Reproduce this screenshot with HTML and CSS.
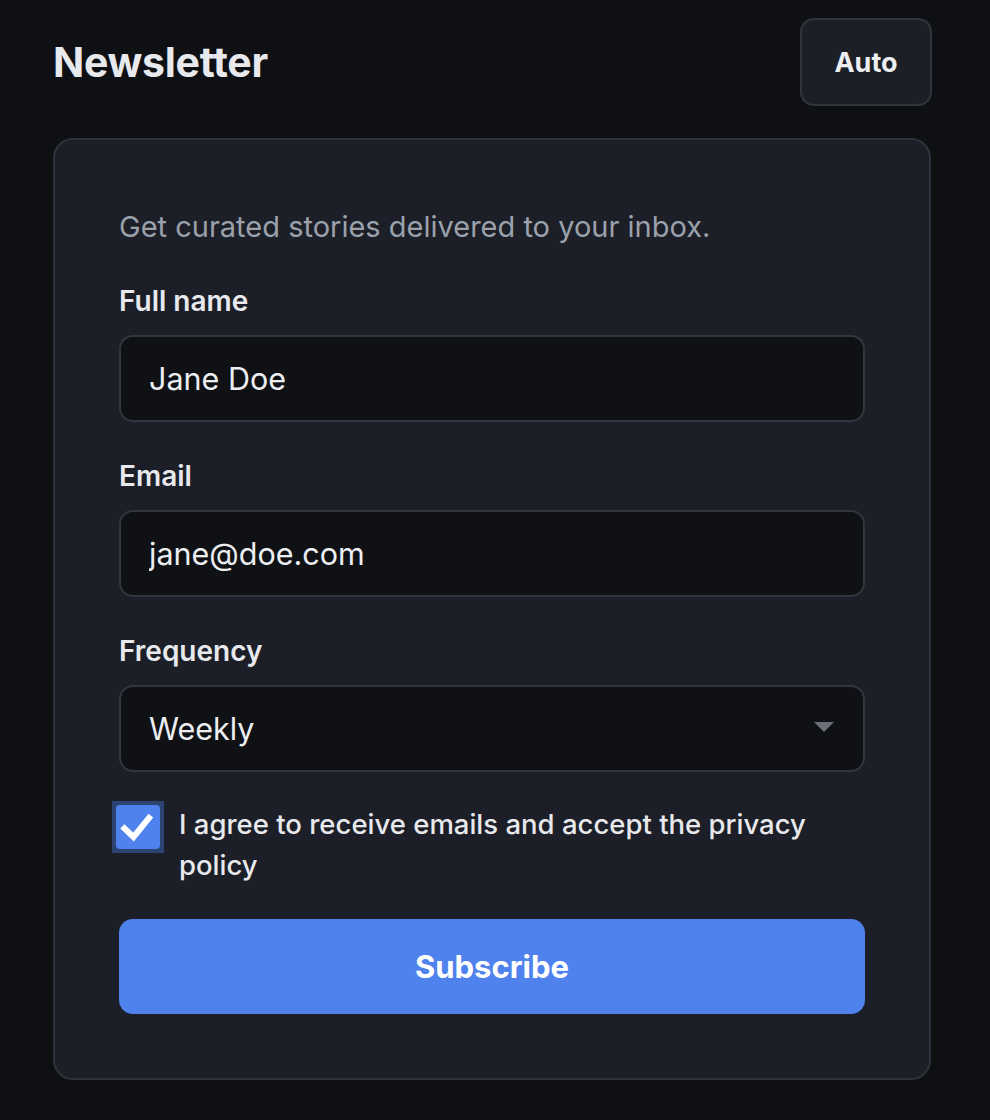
FILE: index.html
```html
<!DOCTYPE html>
<html lang="en">
<head>
    <meta charset="UTF-8">
    <meta name="viewport" content="width=device-width, initial-scale=1.0">
    <title>Newsletter</title>
    <link rel="stylesheet" href="styles.css">
</head>
<body>
    <div class="page">
        <header class="top-bar">
            <h1>Newsletter</h1>
            <button class="theme-btn">Auto</button>
        </header>

        <form class="card">
            <p class="intro">Get curated stories delivered to your inbox.</p>

            <div class="form-group">
                <label for="full-name">Full name</label>
                <input type="text" id="full-name" value="Jane Doe">
            </div>

            <div class="form-group">
                <label for="email">Email</label>
                <input type="email" id="email" value="jane@doe.com">
            </div>

            <div class="form-group">
                <label for="frequency">Frequency</label>
                <div class="select-wrap">
                    <select id="frequency">
                        <option>Daily</option>
                        <option selected>Weekly</option>
                        <option>Monthly</option>
                    </select>
                    <svg class="caret" width="20" height="10" viewBox="0 0 20 10"><path d="M0 0h20L10 10z" fill="#6b7079"/></svg>
                </div>
            </div>

            <label class="agree">
                <span class="check-ring">
                    <span class="check-box">
                        <svg width="42" height="42" viewBox="0 0 42 42"><path d="M8.5 23.5l9 8.5L33 13" fill="none" stroke="#fff" stroke-width="6" stroke-linecap="square"/></svg>
                    </span>
                </span>
                <span class="agree-text">I agree to receive emails and accept the privacy policy</span>
            </label>

            <button type="button" class="btn">Subscribe</button>
        </form>
    </div>
</body>
</html>
```

FILE: styles.css
```css
body {
    margin: 0;
    background: #0e1014;
    color: #e8e9ed;
    font-family: Inter, "Noto Sans", Arial, sans-serif;
}
.page {
    padding: 18px 59px 40px 53px;
}
.top-bar {
    display: flex;
    justify-content: space-between;
    align-items: center;
    margin-bottom: 32px;
}
h1 {
    margin: 0;
    font-size: 41px;
    font-weight: 700;
    letter-spacing: -0.3px;
}
.theme-btn {
    width: 132px;
    height: 88px;
    margin-right: -1px;
    background: #1c1f26;
    color: #eceef2;
    border: 2px solid #30343c;
    border-radius: 14px;
    font-family: inherit;
    font-size: 27px;
    font-weight: 700;
}
.card {
    display: flex;
    flex-direction: column;
    gap: 36px;
    background: #1c1f27;
    border: 2px solid #2e323a;
    border-radius: 20px;
    padding: 67px 64px 64px;
}
.intro {
    margin: 0;
    font-size: 29px;
    line-height: 40px;
    color: #9ba1ab;
}
.form-group label {
    display: block;
    margin-bottom: 16px;
    font-size: 28px;
    line-height: 36px;
    font-weight: 600;
}
input,
select {
    display: block;
    width: 100%;
    box-sizing: border-box;
    height: 87px;
    padding: 0 28px;
    background: #0f1115;
    color: #eceef2;
    border: 2px solid #30353e;
    border-radius: 14px;
    font-family: inherit;
    font-size: 30.5px;
    outline: none;
}
select {
    appearance: none;
}
.select-wrap {
    position: relative;
}
.caret {
    position: absolute;
    right: 31px;
    top: 37px;
}
.agree {
    display: flex;
    align-items: flex-start;
    gap: 15px;
    margin-top: -4px;
    margin-left: -7px;
}
.check-ring {
    flex: none;
    width: 52px;
    height: 52px;
    box-sizing: border-box;
    padding: 4px;
    margin-top: -3px;
    background: #2d4472;
}
.check-box {
    display: block;
    width: 44px;
    height: 44px;
    border-radius: 4px;
    background: #4f82ed;
}
.check-box svg {
    display: block;
}
.agree-text {
    font-size: 27.5px;
    line-height: 41px;
    font-weight: 500;
    padding-right: 40px;
}
.btn {
    margin-top: -3px;
    height: 95px;
    background: #4f82ed;
    color: #fff;
    border: none;
    border-radius: 14px;
    font-family: inherit;
    font-size: 31px;
    font-weight: 700;
}
```
